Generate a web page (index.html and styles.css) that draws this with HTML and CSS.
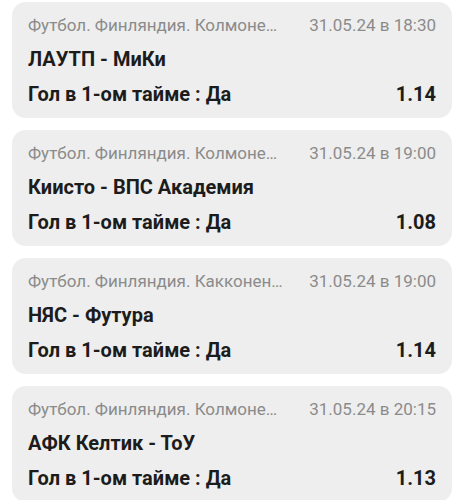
FILE: index.html
```html
<!DOCTYPE html>
<html lang="ru">
<head>
<meta charset="utf-8">
<link rel="stylesheet" href="styles.css">
</head>
<body>
<div class="list">
  <div class="card">
    <div class="head"><span class="league">Футбол. Финляндия. Колмонен. Хельсинки</span><span class="date">31.05.24 в 18:30</span></div>
    <div class="match">ЛАУТП - МиКи</div>
    <div class="bet"><span>Гол в 1-ом тайме : Да</span><span>1.14</span></div>
  </div>
  <div class="card">
    <div class="head"><span class="league">Футбол. Финляндия. Колмонен. Хельсинки</span><span class="date">31.05.24 в 19:00</span></div>
    <div class="match">Киисто - ВПС Академия</div>
    <div class="bet"><span>Гол в 1-ом тайме : Да</span><span>1.08</span></div>
  </div>
  <div class="card">
    <div class="head"><span class="league">Футбол. Финляндия. Какконен. Группа B</span><span class="date">31.05.24 в 19:00</span></div>
    <div class="match">НЯС - Футура</div>
    <div class="bet"><span>Гол в 1-ом тайме : Да</span><span>1.14</span></div>
  </div>
  <div class="card">
    <div class="head"><span class="league">Футбол. Финляндия. Колмонен. Хельсинки</span><span class="date">31.05.24 в 20:15</span></div>
    <div class="match">АФК Келтик - ТоУ</div>
    <div class="bet"><span>Гол в 1-ом тайме : Да</span><span>1.13</span></div>
  </div>
</div>
</body>
</html>
```
FILE: styles.css
```css
html, body {
  margin: 0;
  padding: 0;
  background: #ffffff;
}
body {
  font-family: Roboto, "Noto Sans", sans-serif;
}
.list {
  display: flex;
  flex-direction: column;
  gap: 12px;
  padding: 2px 16px 0 12px;
}
.card {
  background: #eeeeee;
  border-radius: 14px;
  padding: 6px 16px 6px 16px;
  height: 116px;
  box-sizing: border-box;
}
.head {
  display: flex;
  justify-content: space-between;
  font-size: 17px;
  line-height: 34px;
  color: #8b8b8b;
}
.league {
  flex: 1;
  min-width: 0;
  overflow: hidden;
  white-space: nowrap;
  text-overflow: ellipsis;
  margin-right: 23px;
}
.date {
  white-space: nowrap;
}
.match, .bet {
  font-size: 20px;
  font-weight: 700;
  line-height: 35px;
  color: #1c1c1c;
}
.bet {
  display: flex;
  justify-content: space-between;
}
```
